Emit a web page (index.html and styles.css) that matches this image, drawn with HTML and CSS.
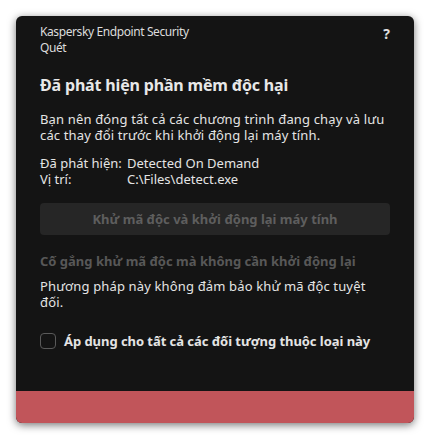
FILE: index.html
```html
<!DOCTYPE html>
<html lang="vi">
<head>
<meta charset="utf-8">
<link rel="stylesheet" href="styles.css">
</head>
<body>
<div class="card">
  <div class="content">
    <div class="header">
      <div class="app">
        <div>Kaspersky Endpoint Security</div>
        <div>Quét</div>
      </div>
      <div class="help">?</div>
    </div>
    <h1 class="heading">Đã phát hiện phần mềm độc hại</h1>
    <p class="text">Bạn nên đóng tất cả các chương trình đang chạy và lưu các thay đổi trước khi khởi động lại máy tính.</p>
    <div class="details">
      <span>Đã phát hiện:</span><span>Detected On Demand</span>
      <span>Vị trí:</span><span>C:\Files\detect.exe</span>
    </div>
    <div class="btn">Khử mã độc và khởi động lại máy tính</div>
    <div class="link">Cố gắng khử mã độc mà không cần khởi động lại</div>
    <p class="text note">Phương pháp này không đảm bảo khử mã độc tuyệt đối.</p>
    <label class="check"><span class="box"></span><span>Áp dụng cho tất cả các đối tượng thuộc loại này</span></label>
  </div>
  <div class="footer"></div>
</div>
</body>
</html>
```
FILE: styles.css
```css
* { box-sizing: border-box; }
html, body { margin: 0; background: #ffffff; }
body { padding: 16px; font-family: "Noto Sans", "Open Sans", sans-serif; }
.card {
  width: 398px;
  height: 407px;
  background: #141414;
  border-radius: 6px;
  overflow: hidden;
  box-shadow: 0 2px 8px rgba(0,0,0,0.55);
  display: flex;
  flex-direction: column;
}
.content { flex: 1; padding: 8px 24px 0; color: #e4e4e4; }
.header { display: flex; justify-content: space-between; align-items: flex-start; }
.app { font-size: 12px; line-height: 16px; letter-spacing: -0.4px; color: #dcdcdc; }
.help { font-size: 14px; font-weight: 700; line-height: 16px; margin-right: 0; padding-top: 2px; color: #e0e0e0; }
.heading { margin: 18px 0 0; font-size: 16px; line-height: 22px; font-weight: 700; letter-spacing: -0.17px; color: #e8e8e8; }
.text { margin: 15px 0 0; font-size: 13px; line-height: 16px; letter-spacing: 0.15px; color: #e4e4e4; }
.details {
  margin-top: 12px;
  display: grid;
  grid-template-columns: 87px auto;
  font-size: 13px;
  line-height: 16px;
  color: #e4e4e4;
  white-space: nowrap;
}
.btn {
  margin-top: 16px;
  height: 32px;
  border-radius: 4px;
  background: #262626;
  color: #5e5e5e;
  font-size: 13px;
  font-weight: 700;
  display: flex;
  align-items: center;
  justify-content: center;
}
.link { margin-top: 18px; font-size: 13px; line-height: 16px; font-weight: 700; color: #585858; }
.note { margin-top: 9px; }
.check { margin-top: 23px; display: flex; align-items: center; gap: 8px; font-size: 13px; line-height: 16px; font-weight: 700; letter-spacing: -0.05px; color: #e4e4e4; }
.box { width: 16px; height: 16px; border: 1px solid #5a5a5a; border-radius: 4px; flex: none; }
.footer { height: 32px; background: #c1555a; flex: none; }
```
